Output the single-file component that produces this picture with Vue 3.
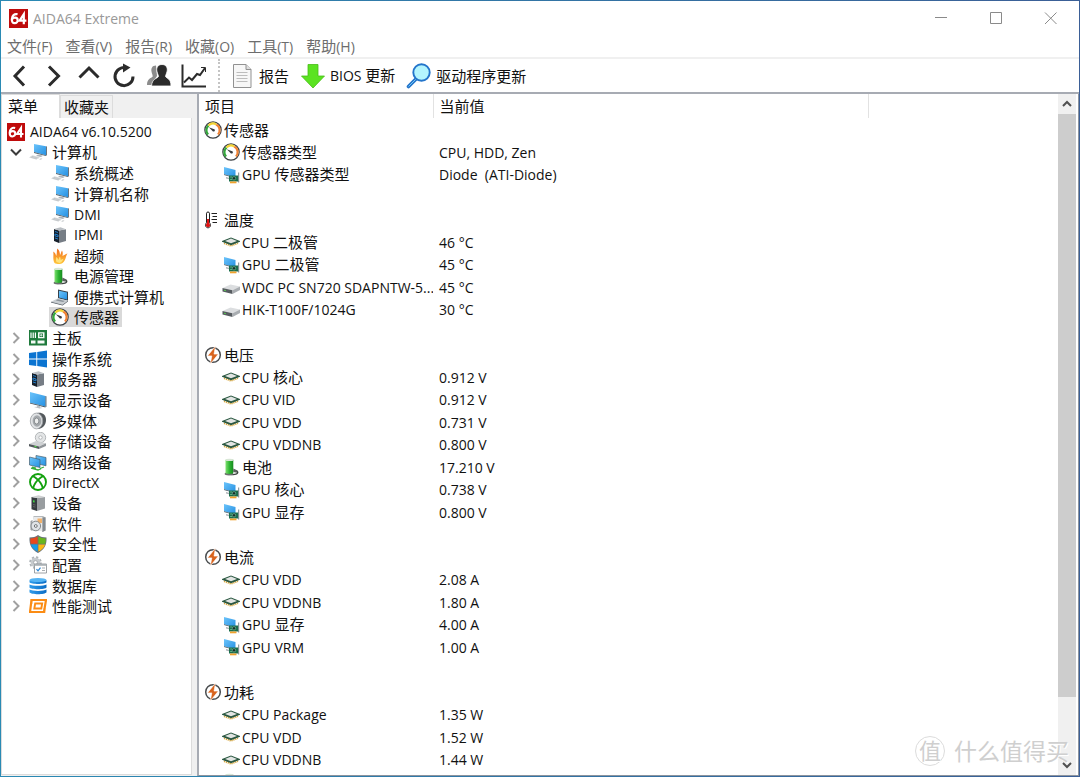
<script setup>
import { h } from 'vue'

// Latin runs are set one step smaller than the Chinese runs beside them.
const Txt = (props) =>
  h(
    'span',
    { class: 'txt' },
    (props.value.match(/[\u2e80-\uffff]+|[^\u2e80-\uffff]+/g) || []).map((run) =>
      h('span', { class: /[\u2e80-\uffff]/.test(run) ? 'han' : 'latin' }, run)
    )
  )
Txt.props = ['value']

const menus = ['文件(F)', '查看(V)', '报告(R)', '收藏(O)', '工具(T)', '帮助(H)']

const tree = [
  { level: 0, icon: 'logo', name: 'AIDA64 v6.10.5200' },
  { level: 1, icon: 'pc', name: '计算机', open: true },
  { level: 2, icon: 'pc', name: '系统概述' },
  { level: 2, icon: 'pc', name: '计算机名称' },
  { level: 2, icon: 'pc', name: 'DMI' },
  { level: 2, icon: 'server', name: 'IPMI' },
  { level: 2, icon: 'flame', name: '超频' },
  { level: 2, icon: 'battery', name: '电源管理' },
  { level: 2, icon: 'laptop', name: '便携式计算机' },
  { level: 2, icon: 'gauge', name: '传感器', selected: true },
  { level: 1, icon: 'board', name: '主板' },
  { level: 1, icon: 'windows', name: '操作系统' },
  { level: 1, icon: 'server', name: '服务器' },
  { level: 1, icon: 'display', name: '显示设备' },
  { level: 1, icon: 'speaker', name: '多媒体' },
  { level: 1, icon: 'storage', name: '存储设备' },
  { level: 1, icon: 'network', name: '网络设备' },
  { level: 1, icon: 'directx', name: 'DirectX' },
  { level: 1, icon: 'device', name: '设备' },
  { level: 1, icon: 'software', name: '软件' },
  { level: 1, icon: 'shield', name: '安全性' },
  { level: 1, icon: 'config', name: '配置' },
  { level: 1, icon: 'database', name: '数据库' },
  { level: 1, icon: 'bench', name: '性能测试' }
]

const rows = [
  { head: true, icon: 'gauge', name: '传感器' },
  { icon: 'gauge', name: '传感器类型', value: 'CPU, HDD, Zen' },
  { icon: 'gpu', name: 'GPU 传感器类型', value: 'Diode  (ATI-Diode)' },
  {},
  { head: true, icon: 'thermo', name: '温度' },
  { icon: 'cpu', name: 'CPU 二极管', value: '46 °C' },
  { icon: 'gpu', name: 'GPU 二极管', value: '45 °C' },
  { icon: 'drive', name: 'WDC PC SN720 SDAPNTW-5...', value: '45 °C' },
  { icon: 'drive', name: 'HIK-T100F/1024G', value: '30 °C' },
  {},
  { head: true, icon: 'bolt', name: '电压' },
  { icon: 'cpu', name: 'CPU 核心', value: '0.912 V' },
  { icon: 'cpu', name: 'CPU VID', value: '0.912 V' },
  { icon: 'cpu', name: 'CPU VDD', value: '0.731 V' },
  { icon: 'cpu', name: 'CPU VDDNB', value: '0.800 V' },
  { icon: 'battery', name: '电池', value: '17.210 V' },
  { icon: 'gpu', name: 'GPU 核心', value: '0.738 V' },
  { icon: 'gpu', name: 'GPU 显存', value: '0.800 V' },
  {},
  { head: true, icon: 'bolt', name: '电流' },
  { icon: 'cpu', name: 'CPU VDD', value: '2.08 A' },
  { icon: 'cpu', name: 'CPU VDDNB', value: '1.80 A' },
  { icon: 'gpu', name: 'GPU 显存', value: '4.00 A' },
  { icon: 'gpu', name: 'GPU VRM', value: '1.00 A' },
  {},
  { head: true, icon: 'bolt', name: '功耗' },
  { icon: 'cpu', name: 'CPU Package', value: '1.35 W' },
  { icon: 'cpu', name: 'CPU VDD', value: '1.52 W' },
  { icon: 'cpu', name: 'CPU VDDNB', value: '1.44 W' },
  { icon: 'battery', name: '', value: '' }
]
</script>

<template>
  <svg class="defs" aria-hidden="true">
    <defs>
      <linearGradient id="g-screen" x1="0" y1="0" x2="1" y2="1">
        <stop offset="0" stop-color="#6cc4fb" />
        <stop offset="1" stop-color="#2590e2" />
      </linearGradient>
      <linearGradient id="g-cell" x1="0" y1="0" x2="1" y2="0">
        <stop offset="0" stop-color="#7fe070" />
        <stop offset="0.5" stop-color="#2fb534" />
        <stop offset="1" stop-color="#168a1e" />
      </linearGradient>
      <linearGradient id="g-fire" x1="0" y1="0" x2="0" y2="1">
        <stop offset="0" stop-color="#f26a1b" />
        <stop offset="1" stop-color="#ffc83d" />
      </linearGradient>
      <linearGradient id="g-db" x1="0" y1="0" x2="1" y2="0">
        <stop offset="0" stop-color="#2f9bea" />
        <stop offset="1" stop-color="#0b6cc4" />
      </linearGradient>
    </defs>
    <symbol id="i-logo" viewBox="0 0 19 19">
      <rect width="19" height="19" fill="#bf0b0b" />
      <path d="M8.600 5.200C5.400 4.400 2.800 6.600 2.800 10.200c0 2.600 1 4 2.900 4s3-1.300 3-3-1.100-2.600-2.600-2.600-2.700.8-3 2" fill="none" stroke="#fff" stroke-width="2.200" />
      <path d="M14.800 15.200V5.200L10.600 11.600h6.800" fill="none" stroke="#fff" stroke-width="2.200" />
    </symbol>
    <symbol id="i-pc" viewBox="0 0 18 18">
      <path d="M5 1l12 2.200v9L5 9z" fill="url(#g-screen)" />
      <path d="M17 3.200l.8.3v9.300l-.8-.6z" fill="#45525c" />
      <path d="M5 9l12 3.200v.9L5 10z" fill="#4a5a66" />
      <path d="M9 11.500l5 1.300-2 1.300-5-1.200z" fill="#aeb4b9" />
      <path d="M3.500 12.200l7.500 2-4 2.300-7-1.900z" fill="#d9dcde" />
      <path d="M1.500 14.100l6.500 1.900M2.800 13.300l6.700 1.900" stroke="#b5babd" stroke-width=".6" />
      <path d="M10 16.200l2-1 1.500.5-1.800 1z" fill="#c3c7ca" />
    </symbol>
    <symbol id="i-server" viewBox="0 0 18 18">
      <path d="M3 3l5 1.500V17l-5-2z" fill="#17202b" />
      <path d="M8 4.500l7-1.300V15l-7 2z" fill="#767d85" />
      <path d="M3 3l6.500-1.800L15 3.200 8 4.500z" fill="#b9bec3" />
      <path d="M4 5.500l3 1M4 8l3 1v1.800l-3-.9zM4 12l3 1" stroke="#2186d9" stroke-width=".9" fill="none" />
    </symbol>
    <symbol id="i-flame" viewBox="0 0 18 18">
      <path d="M3.500 16C1.300 12 3 8 2.200 4.500c1.900 1.100 2.700 3 2.900 4.500C6.300 6.500 5.500 4 6.300 1.500c2.300 2 2.600 4.500 2.700 6.500 1-1.200 1-3 2-4.500 1 1.700.8 3.500.5 5.500 1.600-.6 2.900-2 5-2.500-1.700 2-1.200 4-2.600 6.500C12.600 15.600 11 17 8.500 17S4.500 16.700 3.500 16z" fill="url(#g-fire)" />
      <path d="M5.500 15c-1-2-.3-3.500-.3-5 1.300.8 1.800 1.800 2 3 .8-1 .8-2.200 1.600-3.300.8 1.100.9 2.300.9 3.300 1-.6 1.800-1 2.800-1.200-.9 1.500-1 3.300-4 4.200z" fill="#ffe27a" />
    </symbol>
    <symbol id="i-battery" viewBox="0 0 18 18">
      <path d="M8 16.300c5 .8 8.200-.2 7.700-2.300s-2.500-.7-4-1.300" stroke="#3c4440" stroke-width="1.300" fill="none" />
      <ellipse cx="7" cy="16" rx="4.400" ry="1.400" fill="#6b706d" />
      <path d="M3.500 1.700h7.800V15c-2 1.200-5.900 1.200-7.800 0z" fill="url(#g-cell)" />
      <ellipse cx="7.400" cy="1.900" rx="3.900" ry="1.200" fill="#d8e6d6" />
      <path d="M11.300 10.500l4.200 2-.6 2.200-3.600-.8z" fill="#5a615d" />
    </symbol>
    <symbol id="i-laptop" viewBox="0 0 18 18">
      <path d="M7 1.500l10 2.200v9L7 10.300z" fill="#38424b" />
      <path d="M8 2.800l8 1.800v6.800L8 9.500z" fill="url(#g-screen)" />
      <path d="M7 10.300l10 2.400-5.500 4L0 13.800z" fill="#c9ced2" />
      <path d="M0 13.800l11.500 2.900 5.500-4v.9l-5.400 4L0 14.600z" fill="#4c555d" />
      <path d="M6.800 11.300l7 1.600-1.800 1.200-7.200-1.700z" fill="#8b949b" />
    </symbol>
    <symbol id="i-gauge" viewBox="0 0 18 18">
      <circle cx="9" cy="9" r="8.200" fill="#fff" stroke="#3d4246" stroke-width="1.200" />
      <path d="M4.100 13.600A6.400 6.400 0 0 1 4.500 4.500" stroke="#34a83c" stroke-width="2.200" fill="none" />
      <path d="M4.500 4.500a6.400 6.400 0 0 1 7.800-1" stroke="#f4d535" stroke-width="2.200" fill="none" />
      <path d="M12.300 3.500a6.400 6.400 0 0 1 1.700 9.900" stroke="#f08234" stroke-width="2.200" fill="none" />
      <path d="M4.800 6.300l4.700 1.600a1.300 1.300 0 1 1-1 2z" fill="#3a3d40" />
    </symbol>
    <symbol id="i-board" viewBox="0 0 18 18">
      <rect y="1" width="18" height="15.500" fill="#1f7a3c" />
      <path d="M2 3.500v5.500M4.200 3.500v5.500M6.400 3.500v5.500" stroke="#fff" stroke-width="1.200" />
      <path d="M9 3.200h6.500v6H9zM2 11.500h4.500v3H2zM8.500 11.500h7v3h-7z" fill="#f4faf5" />
      <path d="M10.500 4.500H14V8h-3.500z" fill="#1f7a3c" />
      <path d="M11.700 5.700h1.200v1.200h-1.200zM10 12.800h4" stroke="#fff" fill="none" stroke-width=".8" />
    </symbol>
    <symbol id="i-windows" viewBox="0 0 18 18">
      <path d="M0 3l7.300-1v6.500H0zM8.200 1.900L18 .5v8H8.200zM0 9.400h7.300V16L0 15zM8.200 9.400H18v8.100l-9.800-1.400z" fill="#0b74d1" />
    </symbol>
    <symbol id="i-display" viewBox="0 0 18 18">
      <path d="M1 1l15.500 4v10.500L1 11.700z" fill="url(#g-screen)" />
      <path d="M16.500 5l.9.300v10.800l-.9-.6zM1 11.700l15.500 3.800v.9L1 12.600z" fill="#40505b" />
      <path d="M8 14.200l3 .8v1.300l2.500.8-3 .5-5.500-1.500 3-.4z" fill="#b9bec2" />
    </symbol>
    <symbol id="i-speaker" viewBox="0 0 18 18">
      <path d="M8 1c5-.8 9 1.500 9 7S13 17 9 17z" fill="#53585c" />
      <ellipse cx="7.500" cy="9" rx="6.200" ry="7.900" fill="#e1e3e5" stroke="#9a9ea2" stroke-width=".8" />
      <ellipse cx="8" cy="9" rx="4.400" ry="5.800" fill="#a5a9ad" />
      <ellipse cx="7.600" cy="9" rx="2.300" ry="3" fill="#eceded" stroke="#6d7276" stroke-width=".7" />
    </symbol>
    <symbol id="i-storage" viewBox="0 0 18 18">
      <circle cx="11.500" cy="5.500" r="5.200" fill="#e3e5e6" stroke="#a4a8ab" stroke-width=".8" />
      <circle cx="11.500" cy="5.500" r="1.700" fill="#fff" stroke="#a4a8ab" stroke-width=".8" />
      <path d="M0 12l7-3 10 2.300-7 3.200z" fill="#cfd2d4" />
      <path d="M0 12l10 2.500V17L0 14.300z" fill="#52585c" />
      <path d="M10 14.500l7-3.200v2.600L10 17z" fill="#8f9498" />
      <path d="M5.500 14.400l2 .5" stroke="#58dc4c" stroke-width="1.200" />
    </symbol>
    <symbol id="i-network" viewBox="0 0 18 18">
      <path d="M7 2.500l10 2v8.300l-10-2.300z" fill="url(#g-screen)" stroke="#49606e" stroke-width=".7" />
      <path d="M.5 4l10.500 2.500v8L.5 12z" fill="url(#g-screen)" stroke="#49606e" stroke-width=".7" />
      <path d="M3 14.200l4 1M11 15.500l4-1.500M2 15.200l7 1.800 3-1.300" stroke="#38ae3c" stroke-width="1.300" fill="none" />
    </symbol>
    <symbol id="i-directx" viewBox="0 0 18 18">
      <circle cx="9" cy="9" r="8" fill="#fff" stroke="#13a10e" stroke-width="1.900" />
      <path d="M4.200 15.200C5 11.500 7 8 11.800 4.500c1.200-.9 1.500-1.100 2.700-1.200M13.800 15.200C13 11.500 11 8 6.200 4.500c-1.200-.9-1.500-1.100-2.700-1.200" stroke="#13a10e" stroke-width="1.900" fill="none" />
    </symbol>
    <symbol id="i-device" viewBox="0 0 18 18">
      <path d="M2.500 3l5.500 1V17l-5.500-1.700z" fill="#363c40" />
      <path d="M8 4l8-1v11.500L8 17z" fill="#999da0" />
      <path d="M2.500 3l7-1.800L16 3 8 4z" fill="#cfd1d2" />
      <path d="M4 6.200l1.600.4v2L4 8.200z" fill="#41d942" />
      <path d="M4 10.500l2.500.6M4 12.500l2.500.6" stroke="#777" stroke-width=".7" />
    </symbol>
    <symbol id="i-software" viewBox="0 0 18 18">
      <path d="M4.500 1H14l2.500 1.500v13L13 17V4.500H4.500z" fill="#b4b8bb" />
      <path d="M4.500 2h9v14h-9z" fill="#e9eaeb" />
      <path d="M8.500 3.500h4.500V8H8.500z" fill="#f2b26b" />
      <path d="M13.500 2.500l3-.2v13.200l-3 1.500z" fill="#858b90" />
      <path d="M1.500 6l2-1v11l-2-1z" fill="#9a9fa3" />
      <circle cx="6.800" cy="11" r="4.800" fill="#dfe3e6" stroke="#7c8286" stroke-width=".9" />
      <circle cx="6.800" cy="11" r="1.400" fill="#fff" stroke="#5d6367" stroke-width=".9" />
    </symbol>
    <symbol id="i-shield" viewBox="0 0 18 18">
      <path d="M9 0c2.500 1.800 5 2.500 8.500 2.500C18 10 15 15 9 18 3 15 0 10 .5 2.500 4 2.500 6.500 1.800 9 0z" fill="#68717a" />
      <path d="M8.600 1.500V8.700H1.700C1.300 7 1.300 5.500 1.400 3.500c2.900 0 5-.7 7.200-2z" fill="#e8481c" />
      <path d="M9.400 1.500c2.200 1.300 4.300 2 7.200 2 .1 2 .1 3.500-.3 5.200H9.400z" fill="#68b71c" />
      <path d="M8.600 9.500v7.200c-3.400-1.800-5.800-4.200-6.700-7.200z" fill="#149dea" />
      <path d="M9.400 9.500v7.200c3.400-1.800 5.800-4.200 6.700-7.200z" fill="#fcb813" />
    </symbol>
    <symbol id="i-config" viewBox="0 0 18 18">
      <circle cx="6.500" cy="6.500" r="4.800" fill="#c6cacd" />
      <circle cx="6.500" cy="6.500" r="5.500" fill="none" stroke="#adb2b6" stroke-width="1.600" stroke-dasharray="2.300 2" />
      <circle cx="6.500" cy="6.500" r="1.900" fill="#fff" stroke="#92979b" stroke-width=".7" />
      <path d="M5.500 8h12v9h-12z" fill="#fff" stroke="#858b90" stroke-width=".8" />
      <path d="M5.500 8h12v1.800h-12z" fill="#aab0b4" />
      <path d="M7.500 13.200l1.500 1.600 2.500-3.200" fill="none" stroke="#2b86d4" stroke-width="1.200" />
      <path d="M13 12h3M13 14.500h3" stroke="#9fa5a9" stroke-width=".9" />
    </symbol>
    <symbol id="i-database" viewBox="0 0 18 18">
      <path d="M.5 3.200v2c1.500 2.300 15.500 2.300 17 0v-2z" fill="url(#g-db)" />
      <ellipse cx="9" cy="3" rx="8.500" ry="2" fill="#54b4f4" />
      <path d="M.5 7.400v3c1.500 2.300 15.500 2.300 17 0v-3c-2.500 1.900-14.500 1.900-17 0zM.5 12.600v2.600c1.500 2.600 15.500 2.600 17 0v-2.600c-2.500 1.900-14.500 1.900-17 0z" fill="url(#g-db)" />
    </symbol>
    <symbol id="i-bench" viewBox="0 0 18 18">
      <path d="M2.500 3H17l-2 12H1z" fill="none" stroke="#fb8c14" stroke-width="2.200" />
      <path d="M6.200 6.500h7L12.300 11.500H5.300z" fill="none" stroke="#fb8c14" stroke-width="1.900" />
      <path d="M2.500 2v5M15.500 11v5" stroke="#fb8c14" stroke-width="1.500" />
    </symbol>
    <symbol id="i-gpu" viewBox="0 0 18 18">
      <path d="M2 1l11.500 3v7.500L2 8.300z" fill="url(#g-screen)" />
      <path d="M2 8.300l11.500 3.200v.8L2 9.100z" fill="#43525d" />
      <path d="M4 11l4 1v1.500l-4-1z" fill="#aeb3b7" />
      <path d="M7 9.500h9.500v6H7z" fill="#1b6d4c" />
      <path d="M16.700 6.500v10" stroke="#7c858b" stroke-width="1" />
      <path d="M8 15.500h6.500V17.300H8z" fill="#f0a22c" />
      <circle cx="12" cy="12.300" r="1.700" fill="#142f27" stroke="#85c6aa" stroke-width=".6" />
      <path d="M8.300 11h1.500M8.300 13.500h1.500" stroke="#8cd4ac" stroke-width=".8" />
    </symbol>
    <symbol id="i-cpu" viewBox="0 0 18 18">
      <path d="M2 10.200l7 2.700 7-2.700" stroke="#d6a336" stroke-width="1.700" stroke-dasharray="1.200 .8" fill="none" />
      <path d="M9 4.500l9 3.500v.8l-9 3.400-9-3.400V8z" fill="#2a5740" />
      <path d="M9 5.500l6 2.400-6 2.300-6-2.300z" fill="#e2e5e3" />
    </symbol>
    <symbol id="i-drive" viewBox="0 0 18 18">
      <path d="M.5 10l8-3.500 9.500 2-7.500 3.800z" fill="#dcdee0" />
      <path d="M.5 10l10 2.300V16L.5 13.600z" fill="#575c60" />
      <path d="M10.500 12.300L18 8.500v3.400L10.500 16z" fill="#a9adb1" />
      <path d="M2 12.200l2 .5" stroke="#57c550" />
    </symbol>
    <symbol id="i-thermo" viewBox="0 0 18 18">
      <path d="M2.500 2.200C2.500.6 5.500.6 5.500 2.200v9.600c2 2 .8 5-1.500 5s-3.500-3-1.500-5z" fill="#fff" stroke="#222" stroke-width="1" />
      <path d="M4 8v5" stroke="#e01515" stroke-width="2" />
      <circle cx="4" cy="14.200" r="2.100" fill="#e01515" />
      <path d="M7.500 2.500h5.500M8.500 5.500H13M7.500 8.500H13M8.500 11.500H13" stroke="#222" stroke-width="1" />
    </symbol>
    <symbol id="i-bolt" viewBox="0 0 18 18">
      <circle cx="9" cy="9" r="7.300" fill="#fff" stroke="#4b4e50" stroke-width="1.500" />
      <path d="M11.500 0L3.500 9.900h4.300L6.300 18l8-9.900H10z" fill="#d9641e" stroke="#fff" stroke-width=".6" />
    </symbol>
  </svg>

  <div class="window">
    <div class="frame">
      <header class="titlebar">
        <svg class="app-icon"><use href="#i-logo" /></svg>
        <h1><Txt value="AIDA64 Extreme" /></h1>
        <div class="controls">
          <button aria-label="最小化"><svg viewBox="0 0 13 13"><path d="M1 5.500h12" /></svg></button>
          <button aria-label="最大化"><svg viewBox="0 0 13 13"><path d="M1.500 .5h11v11h-11z" /></svg></button>
          <button aria-label="关闭"><svg viewBox="0 0 13 13"><path d="M1 .5l11.500 11.500M12.500 .5L1 12" /></svg></button>
        </div>
      </header>

      <nav class="menubar">
        <button v-for="m in menus" :key="m"><Txt :value="m" /></button>
      </nav>

      <div class="toolbar">
        <div class="nav-tools">
          <button aria-label="后退"><svg viewBox="0 0 26 26"><path d="M18 3.500L9 13l9 9.500" class="thick" /></svg></button>
          <button aria-label="前进"><svg viewBox="0 0 26 26"><path d="M8 3.500l9.500 9.500L8 22.500" class="thick" /></svg></button>
          <button aria-label="向上"><svg viewBox="0 0 26 26"><path d="M3.500 14.500L13 5l9.500 9.500" class="thick" /></svg></button>
          <button aria-label="刷新">
            <svg viewBox="0 0 26 26"><path d="M15.500 5A9 9 0 1 0 22 13.500" class="thick" /><path d="M12 .5l7.500 4-7.500 5z" fill="#2b2b2b" /></svg>
          </button>
          <button aria-label="用户">
            <svg viewBox="0 0 26 26">
              <path d="M10 2.500c-4 0-5 3-4.500 6 .3 2 1.200 3.300 1.200 5C5 15.500 1 15.500 1 22h6l2-6 2-3z" fill="#8c8c8c" />
              <path d="M16 1.500c-4 0-5.700 3-5.200 6.500.3 2.200 1.500 3.500 1.700 5.500C11 15.800 6 15.500 5.500 23H25c0-7.500-4-7.200-5.500-9.500.2-2 1.400-3.300 1.700-5.500.5-3.500-1.200-6.500-5.200-6.500z" fill="#2b2b2b" stroke="#fff" stroke-width=".8" />
            </svg>
          </button>
          <button aria-label="图表">
            <svg viewBox="0 0 26 26"><path d="M1.500 1.500v22H25" fill="none" stroke="#2b2b2b" stroke-width="2" /><path d="M3 19.500l5-5 3 2.500 5-6 3 1 5-7" fill="none" stroke="#2b2b2b" stroke-width="2" /><path d="M20 4.500h4.500V9" fill="none" stroke="#2b2b2b" stroke-width="1" /></svg>
          </button>
        </div>
        <div class="tools">
          <button class="tool">
            <svg viewBox="0 0 26 26">
              <path d="M4.500 1.500H17l5 5v18H4.500z" fill="#f7f7f7" stroke="#919191" />
              <path d="M17 1.500v5h5" fill="#dedede" stroke="#919191" />
              <path d="M7.500 9.500h11M7.500 12.500h11M7.500 15.500h11M7.500 18.500h11" stroke="#bdbdbd" />
            </svg>
            <Txt value="报告" />
          </button>
          <button class="tool">
            <svg viewBox="0 0 26 26"><path d="M8 1.500h10V13h6.500L13 25 1.500 13H8z" fill="#5be321" stroke="#48bd16" stroke-width=".8" /></svg>
            <Txt value="BIOS 更新" />
          </button>
          <button class="tool">
            <svg viewBox="0 0 26 26">
              <path d="M10 16l-7.500 7.500" stroke="#2475cb" stroke-width="3.600" stroke-linecap="round" />
              <path d="M10 16l-7.500 7.500" stroke="#74c5f4" stroke-width="1" />
              <circle cx="15.500" cy="9.500" r="8.200" fill="#b4f5fe" stroke="#2475cb" stroke-width="1.900" />
            </svg>
            <Txt value="驱动程序更新" />
          </button>
        </div>
      </div>

      <main class="content">
        <aside class="sidebar">
          <div class="tabs" role="tablist">
            <button class="tab active" role="tab" aria-selected="true">菜单</button>
            <button class="tab" role="tab" aria-selected="false">收藏夹</button>
          </div>
          <ul class="tree" role="tree">
            <li
              v-for="(n, i) in tree"
              :key="i"
              role="treeitem"
              :aria-level="n.level + 1"
              :aria-selected="!!n.selected"
              :class="['node', 'level-' + n.level]"
            >
              <button v-if="n.level === 1" class="twist" :class="{ open: n.open }" :aria-label="n.open ? '折叠' : '展开'">
                <svg v-if="n.open" viewBox="0 0 12 12"><path d="M1 3.500l5 5 5-5" /></svg>
                <svg v-else viewBox="0 0 12 12"><path d="M3.500 1l5 5-5 5" /></svg>
              </button>
              <span class="label" :class="{ selected: n.selected }">
                <svg class="icon"><use :href="'#i-' + n.icon" /></svg>
                <Txt :value="n.name" />
              </span>
            </li>
          </ul>
        </aside>

        <section class="pane">
          <div class="list">
            <table>
              <colgroup>
                <col class="c-name" />
                <col class="c-value" />
                <col />
              </colgroup>
              <thead>
                <tr>
                  <th scope="col">项目</th>
                  <th scope="col">当前值</th>
                  <td></td>
                </tr>
              </thead>
              <tbody>
                <tr v-for="(r, i) in rows" :key="i">
                  <td>
                    <div v-if="r.icon" class="cell" :class="{ child: !r.head }">
                      <svg class="icon"><use :href="'#i-' + r.icon" /></svg>
                      <Txt :value="r.name" />
                    </div>
                  </td>
                  <td><Txt v-if="r.value" :value="r.value" /></td>
                  <td></td>
                </tr>
              </tbody>
            </table>
          </div>
          <div class="scrollbar">
            <button aria-label="向上滚动"><svg viewBox="0 0 12 12"><path d="M2 8l4-4 4 4" /></svg></button>
            <div class="track"><div class="thumb"></div></div>
            <button aria-label="向下滚动"><svg viewBox="0 0 12 12"><path d="M2 4l4 4 4-4" /></svg></button>
          </div>
        </section>
      </main>
    </div>
    <div class="watermark"><span class="seal">值</span><span>什么值得买</span></div>
  </div>
</template>

<style>
body {
  margin: 0;
}
.txt {
  white-space: pre;
}
.txt .latin {
  font-size: 14px;
}
</style>

<style scoped>
.defs {
  position: absolute;
  width: 0;
  height: 0;
}
.window {
  position: relative;
  box-sizing: border-box;
  height: 100vh;
  padding: 1px;
  background: linear-gradient(90deg, #2a8ab4, #3b5f96);
  font-family: "Open Sans", "Noto Sans CJK SC", sans-serif;
  font-size: 15px;
  line-height: 20px;
  color: #111;
}
.frame {
  display: flex;
  flex-direction: column;
  height: 100%;
  background: #fff;
  overflow: hidden;
}
button {
  margin: 0;
  padding: 0;
  border: 0;
  background: none;
  font: inherit;
  color: inherit;
}
svg {
  display: block;
  flex: none;
}
.titlebar {
  display: flex;
  align-items: center;
  flex: none;
  height: 35px;
  padding: 0 1px 0 8px;
  color: #999;
}
.app-icon {
  width: 19px;
  height: 19px;
}
h1 {
  flex: 1;
  margin: 0 0 0 5px;
  font-size: 15px;
  font-weight: 400;
}
.controls {
  display: flex;
}
.controls button {
  display: grid;
  place-items: center;
  width: 55px;
  height: 32px;
}
.controls svg {
  width: 13px;
  height: 13px;
  fill: none;
  stroke: #8a8a8a;
}
.menubar {
  display: flex;
  flex: none;
  gap: 13px;
  height: 21px;
  padding-left: 6px;
  color: #6d6d6d;
  border-bottom: 2px solid #f0f0f0;
}
.toolbar {
  display: flex;
  align-items: center;
  flex: none;
  height: 33px;
  border-bottom: 2px solid #a7abb3;
}
.nav-tools {
  display: flex;
  gap: 9px;
  height: 33px;
  align-items: center;
  padding: 0 11px 0 5px;
  border-right: 2px dotted #c4c4c4;
}
.toolbar svg {
  width: 26px;
  height: 26px;
}
.thick {
  fill: none;
  stroke: #2b2b2b;
  stroke-width: 3;
}
.tools {
  display: flex;
  gap: 11px;
  padding-left: 9px;
}
.tool {
  display: flex;
  align-items: center;
  gap: 4px;
}
.content {
  display: flex;
  flex: 1;
  min-height: 0;
  background: #f0f0f0;
}
.sidebar {
  display: flex;
  flex-direction: column;
  flex: none;
  width: 191px;
  padding-bottom: 1px;
}
.tabs {
  display: flex;
  align-items: flex-end;
  height: 24px;
}
.tab {
  height: 23px;
  padding: 0 3px;
  border: 1px solid #dcdcdc;
  border-bottom: 0;
}
.tab.active {
  width: 59px;
  height: 24px;
  padding: 0 6px 2px;
  background: #fff;
  text-align: left;
}
.tree {
  flex: 1;
  margin: 0;
  padding: 3px 0 0;
  list-style: none;
  background: #fff;
  border: 1px solid #dcdcdc;
  border-top: 0;
  overflow: hidden;
}
.node {
  display: flex;
  align-items: center;
  height: 21px;
}
.node:nth-child(8n + 2),
.node:nth-child(8n + 5),
.node:nth-child(8n) {
  height: 20px;
}
.level-0 {
  padding-left: 3px;
}
.level-1 {
  padding-left: 8px;
}
.level-2 {
  padding-left: 47px;
}
.twist {
  width: 12px;
  height: 12px;
  margin-right: 5px;
}
.twist svg {
  width: 12px;
  height: 12px;
  fill: none;
  stroke: #a0a0a0;
  stroke-width: 2;
}
.twist.open svg {
  stroke: #3c3c3c;
}
.label {
  display: flex;
  align-items: center;
  gap: 5px;
  height: 20px;
  padding: 0 3px 0 2px;
}
.selected {
  background: #d9d9d9;
}
.icon {
  width: 18px;
  height: 18px;
}
.pane {
  display: flex;
  flex: 1;
  min-width: 0;
  margin-left: 5px;
  padding-right: 2px;
  background: #fff;
  border-left: 2px solid #a7abb3;
  border-right: 1px solid #8d949e;
  border-bottom: 1px solid #8d949e;
}
.list {
  flex: 1;
  min-width: 0;
  overflow: hidden;
}
table {
  width: 100%;
  table-layout: fixed;
  border-collapse: collapse;
}
.c-name {
  width: 234px;
}
.c-value {
  width: 435px;
}
th,
td {
  height: 22px;
  padding: 0 0 0 6px;
  overflow: hidden;
  text-align: left;
  font-weight: 400;
  white-space: nowrap;
  line-height: 20px;
}
thead th {
  height: 24px;
  border-right: 1px solid #e2e2e2;
}
tbody tr:nth-child(odd) td {
  height: 23px;
}
.cell {
  display: flex;
  align-items: center;
  gap: 2px;
  margin-left: -1px;
}
.child {
  padding-left: 18px;
}
.scrollbar {
  display: flex;
  flex-direction: column;
  flex: none;
  width: 18px;
  background: #f0f0f0;
}
.scrollbar button {
  display: grid;
  place-items: center;
  height: 20px;
}
.scrollbar svg {
  width: 12px;
  height: 12px;
  fill: none;
  stroke: #505050;
  stroke-width: 2;
}
.track {
  flex: 1;
}
.thumb {
  height: 91%;
  background: #cdcdcd;
}
.watermark {
  position: absolute;
  right: 11px;
  bottom: 11px;
  display: flex;
  align-items: center;
  gap: 9px;
  font-size: 23px;
  line-height: 30px;
  color: #cfcfcf;
  text-shadow: 1px 1px 0 #fff;
  pointer-events: none;
}
.seal {
  box-sizing: border-box;
  width: 30px;
  height: 30px;
  border: 1px solid #dcdcdc;
  border-radius: 50%;
  font-size: 22px;
  line-height: 27px;
  text-align: center;
}
</style>
